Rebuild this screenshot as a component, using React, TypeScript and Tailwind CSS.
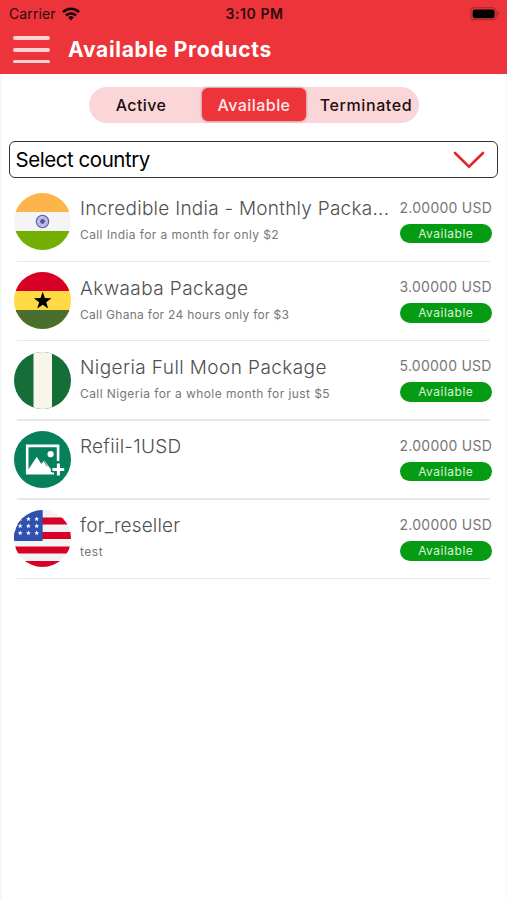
import type { ReactNode } from 'react'

type Product = {
  name: string
  nameClass: string
  note: string
  noteClass: string
  price: string
  flag: string
}

const products: Product[] = [
  { name: 'Incredible India - Monthly Packa...', nameClass: 'tracking-[0.25px]', note: 'Call India for a month for only $2', noteClass: 'tracking-[0.4px]', price: '2.00000 USD', flag: 'in' },
  { name: 'Akwaaba Package', nameClass: 'tracking-[0.4px]', note: 'Call Ghana for 24 hours only for $3', noteClass: 'tracking-[0.28px]', price: '3.00000 USD', flag: 'gh' },
  { name: 'Nigeria Full Moon Package', nameClass: 'tracking-[0.41px]', note: 'Call Nigeria for a whole month for just $5', noteClass: 'tracking-[0.42px]', price: '5.00000 USD', flag: 'ng' },
  { name: 'Refiil-1USD', nameClass: 'tracking-[0.28px]', note: '', noteClass: '', price: '2.00000 USD', flag: 'none' },
  { name: 'for_reseller', nameClass: 'tracking-[0.15px]', note: 'test', noteClass: 'tracking-[0.5px]', price: '2.00000 USD', flag: 'us' },
]

const STAR = 'M0-1L.2351-.3236L.9511-.309L.3804.1236L.5878.809L0 .4L-.5878.809L-.3804.1236L-.9511-.309L-.2351-.3236Z'

const flags: Record<string, ReactNode> = {
  in: (
    <>
      <rect width="57" height="57" fill="#f5f5f5" />
      <rect width="57" height="19" fill="#fdb44b" />
      <rect y="38" width="57" height="19" fill="#73af00" />
      <circle cx="28.5" cy="28.5" r="6.1" fill="#dcdcee" stroke="#6563ad" strokeWidth="1.4" />
      <circle cx="28.5" cy="28.5" r="3.8" fill="none" stroke="#9a98cc" strokeWidth="1.8" strokeDasharray="0.7 0.5" />
      <circle cx="28.5" cy="28.5" r="2.4" fill="#5350a3" />
    </>
  ),
  gh: (
    <>
      <rect width="57" height="57" fill="#ffda44" />
      <rect width="57" height="19" fill="#d80027" />
      <rect y="38" width="57" height="19" fill="#496e2d" />
      <path d={STAR} transform="translate(28.7 29) scale(9.3)" fill="#000" />
    </>
  ),
  ng: (
    <>
      <rect width="57" height="57" fill="#156d37" />
      <rect x="19.5" width="18.5" height="57" fill="#f8f5ea" />
    </>
  ),
  none: (
    <>
      <rect width="57" height="57" fill="#067f5b" />
      <path d="M44.1 30V14.9H13.2V42.2H40" fill="none" stroke="#fff" strokeWidth="2.6" />
      <circle cx="36.6" cy="23.2" r="3.1" fill="#fff" />
      <path d="M14 39L22.8 25.8L27.3 33L30 29.2L36.8 38V43H14Z" fill="#fff" />
      <path d="M28.6 28.2L33.2 35.4" stroke="#067f5b" strokeWidth="0.8" />
      <path d="M44.4 32.2V45M38 38.6H50.2" stroke="#067f5b" strokeWidth="6" />
      <path d="M44.4 32.6V44.6M38.4 38.6H50.2" stroke="#fff" strokeWidth="3" />
    </>
  ),
  us: (
    <>
      <rect width="57" height="57" fill="#f3f3f3" />
      {[7.5, 22, 36.5, 51].map(y => (
        <rect key={y} y={y} width="57" height="7" fill="#d80027" />
      ))}
      <rect width="28.7" height="31" fill="#2f50b0" />
      {[9, 16, 23].map(y =>
        [6.2, 14.4, 22.7].map(x => (
          <path key={`${x}-${y}`} d={STAR} transform={`translate(${x} ${y}) scale(2.7)`} fill="#fff" />
        ))
      )}
    </>
  ),
}

function Flag({ code }: { code: string }) {
  return (
    <div className="mt-[10.2px] h-[57px] w-[57px] shrink-0 overflow-hidden rounded-full">
      <svg width="57" height="57" viewBox="0 0 57 57">{flags[code]}</svg>
    </div>
  )
}

function StatusBar() {
  return (
    <div className="grid h-[27px] grid-cols-3 items-center pl-[9px] pr-[7px] text-[14px] text-[#2b0c0e]">
      <div className="flex items-center gap-[6px]">
        <span className="tracking-[0.1px]">Carrier</span>
        <svg width="18" height="14" viewBox="0 0 18 14" fill="none" stroke="#1a0506" strokeWidth="2.6">
          <path d="M1 5.1A11.4 11.4 0 0 1 17 5.1" />
          <path d="M4 8.5A7.2 7.2 0 0 1 14 8.5" />
          <path d="M6.2 10.4L9 13.4L11.8 10.4A4 4 0 0 0 6.2 10.4Z" fill="#1a0506" stroke="none" />
        </svg>
      </div>
      <div className="text-center font-semibold tracking-[0.6px]">3:10 PM</div>
      <div className="flex justify-end">
        <svg width="30" height="14" viewBox="0 0 30 14">
          <rect x="0.8" y="0.8" width="25.4" height="12" rx="3.6" fill="none" stroke="#a5252b" strokeWidth="1.1" />
          <rect x="2.6" y="2.5" width="22" height="8.8" rx="2.2" fill="#000" />
          <path d="M27.6 4.8V8.8Q29.3 8 29.3 6.8Q29.3 5.6 27.6 4.8Z" fill="#a5252b" />
        </svg>
      </div>
    </div>
  )
}

export default function App() {
  return (
    <div className="flex h-[900px] w-[507px] flex-col overflow-hidden bg-white font-['Inter','Liberation_Sans',sans-serif]">
      <header className="h-[74px] shrink-0 bg-[#ee343b]">
        <StatusBar />
        <div className="flex h-[47px] items-center pb-[1.5px] pl-[13px]">
          <button className="flex w-[37px] flex-col gap-[8px]" aria-label="Menu">
            <span className="h-[3.7px] w-full rounded-full bg-[#fdd3d5]" />
            <span className="h-[3.7px] w-full rounded-full bg-[#fdd3d5]" />
            <span className="h-[3.7px] w-full rounded-full bg-[#fdd3d5]" />
          </button>
          <h1 className="ml-[18px] whitespace-nowrap text-[21px] font-bold leading-none tracking-[0.7px] text-white">Available Products</h1>
        </div>
      </header>

      <main className="flex flex-1 flex-col border-l-2 border-r border-[#f7f7f7]">
        {/* Status filter */}
        <div className="ml-[87px] mt-[12.5px] flex h-[36.5px] w-[330px] shrink-0 items-center rounded-full bg-[#fbd6d8] text-[16px] font-medium text-[#1d1012]">
          <button className="w-[113px] pr-[9px] text-center tracking-[0.4px]">Active</button>
          <button className="h-[33px] w-[104px] rounded-[6px] bg-[#ee343b] text-center tracking-[0.45px] text-[#ffe9ea] shadow-[0_0_3px_rgba(90,0,0,0.55)]">Available</button>
          <button className="w-[113px] whitespace-nowrap pl-[7px] text-center tracking-[0.6px]">Terminated</button>
        </div>

        {/* Country picker */}
        <button className="ml-[7px] mt-[17.5px] flex h-[37.5px] w-[489px] shrink-0 items-center justify-between rounded-[6px] border-[1.5px] border-[#333] pl-[5.5px] pr-[12px] pt-[2px] text-[20.5px] tracking-[-0.45px] text-black">
          <span>Select country</span>
          <svg width="32" height="18" viewBox="0 0 32 18" fill="none" stroke="#e2252b" strokeWidth="2.6" strokeLinecap="round">
            <path d="M2 2L16 15.6L30 2" />
          </svg>
        </button>

        <ul className="mt-[4.9px]">
          {products.map(p => (
            <li key={p.name} className="flex h-[79.3px] flex-col">
              <div className="flex flex-1 pl-[12px] pr-[14px]">
                <Flag code={p.flag} />
                <div className="ml-[9px] flex min-w-0 flex-1 flex-col whitespace-nowrap">
                  <span className={`mt-[14.4px] text-[19px] font-[350] leading-[24px] text-[#505050] ${p.nameClass}`}>{p.name}</span>
                  <span className={`mt-[6px] text-[12px] leading-[16px] text-[#777] ${p.noteClass}`}>{p.note}</span>
                </div>
                <div className="flex w-[92.5px] shrink-0 flex-col">
                  <span className="mt-[15px] whitespace-nowrap text-[14px] leading-[20px] tracking-[0.25px] text-[#777]">{p.price}</span>
                  <span className="mt-[6px] h-[19.5px] rounded-full bg-[#059b12] text-center text-[12px] leading-[19px] tracking-[0.5px] text-[#d9f5da]">Available</span>
                </div>
              </div>
              <div className="ml-[15px] h-[1.6px] w-[473px] bg-[#e8e8e8]" />
            </li>
          ))}
        </ul>
      </main>
    </div>
  )
}
